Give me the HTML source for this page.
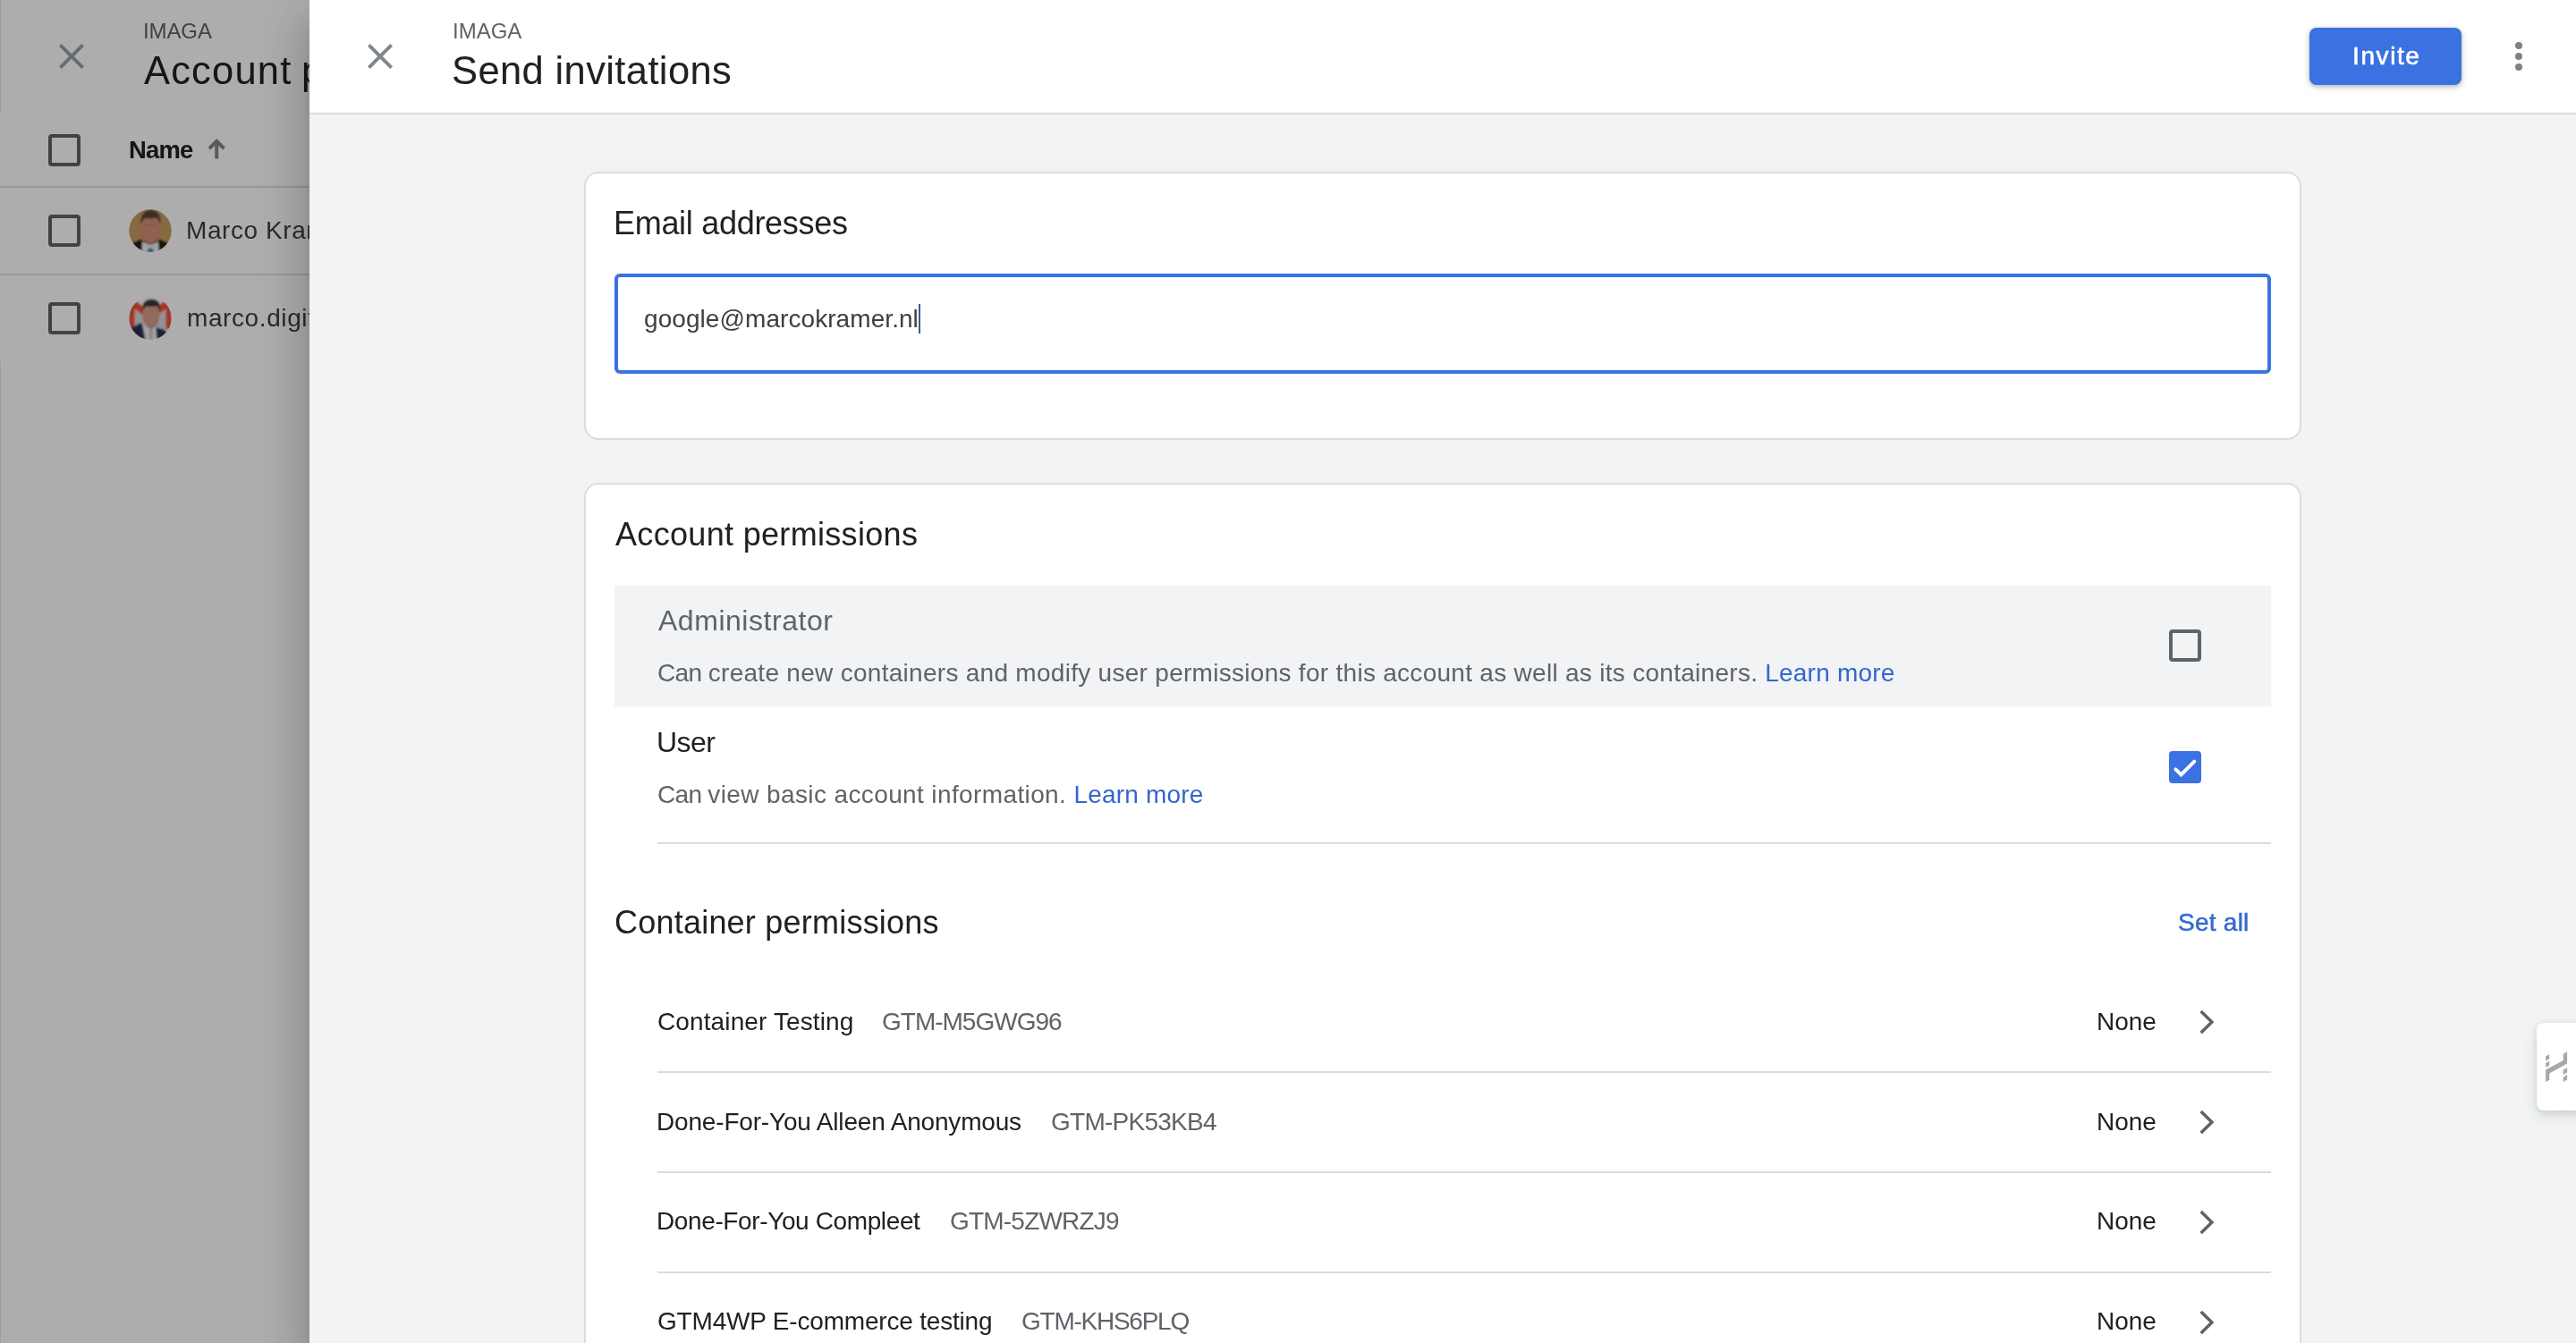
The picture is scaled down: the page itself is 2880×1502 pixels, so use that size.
<!DOCTYPE html>
<html lang="en">
<head>
<meta charset="utf-8">
<title>Send invitations</title>
<style>
*{box-sizing:border-box;margin:0;padding:0}
html,body{width:2880px;height:1502px;overflow:hidden;background:#fff}
body{position:relative;font-family:"Liberation Sans",Arial,sans-serif;color:#202124;-webkit-font-smoothing:antialiased}
.t{position:absolute;white-space:nowrap;line-height:1;will-change:transform}
svg{position:absolute;display:block;overflow:visible}

/* ---------- underlying sheet (dimmed) ---------- */
#under{position:absolute;left:0;top:0;width:400px;height:1502px;background:#fff;overflow:hidden}
#scrim{position:absolute;left:0;top:0;width:400px;height:1502px;background:rgba(0,0,0,.322)}
.edge{position:absolute;left:0;width:1px;background:rgba(0,0,0,.09)}
.hl{position:absolute;left:0;width:400px;height:2px;background:#dadce0}
.cb{position:absolute;width:36px;height:36px;border:4px solid #5f6368;border-radius:4px}
.av{position:absolute;width:48px;height:48px;border-radius:50%;overflow:hidden}

/* ---------- sheet ---------- */
#sheet{position:absolute;left:346px;top:0;width:2534px;height:1502px;background:#f1f3f4;
 box-shadow:0 16px 20px -10px rgba(0,0,0,.2),0 32px 48px 4px rgba(0,0,0,.14),0 12px 60px 10px rgba(0,0,0,.12)}
#hdr{position:absolute;left:0;top:0;width:2534px;height:128px;background:#fff;border-bottom:2px solid #dadce0}
#invite{position:absolute;left:2236px;top:31px;width:170px;height:64px;border-radius:8px;background:#3a72e1;
 box-shadow:0 2px 4px rgba(60,64,67,.26),0 2px 6px 2px rgba(60,64,67,.12)}
.card{position:absolute;left:307px;width:1920px;background:#fff;border:2px solid #dadce0;border-radius:16px}
#card1{top:192px;height:300px}
#card2{top:540px;height:1100px}
#input{position:absolute;left:341px;top:306px;width:1852px;height:112px;border:4px solid #3a72e1;border-radius:6px;background:#fff}
#caret{position:absolute;left:681px;top:340px;width:2px;height:33px;background:#3b5c94}
#adminrow{position:absolute;left:341px;top:655px;width:1852px;height:135px;background:#f1f3f4}
.dv{position:absolute;left:389px;width:1804px;height:2px;background:#dadce0}
.g{color:#5f6368}
.b{color:#3466cb}
.f28{font-size:28px}
.f32{font-size:32px}
.f36{font-size:36px}
#widget{position:absolute;left:2490px;top:1144px;width:60px;height:98px;background:#fff;border-radius:8px;
 box-shadow:0 2px 6px rgba(60,64,67,.12),0 6px 16px rgba(60,64,67,.12)}
</style>
</head>
<body>

<!-- underlying "Account permissions" sheet, dimmed by scrim -->
<div id="under">
  <svg style="left:56px;top:39px" width="48" height="48" viewBox="0 0 24 24"><path fill="#9aa0a6" d="M19 6.41L17.59 5 12 10.59 6.41 5 5 6.41 10.59 12 5 17.59 6.41 19 12 13.41 17.59 19 19 17.59 13.41 12z"/></svg>
  <div class="t g" id="l_imaga" style="left:160px;top:22.500px;font-size:24px;letter-spacing:-.1px">IMAGA</div>
  <div class="t" id="l_title" style="left:161px;top:57.700px;font-size:43.500px;letter-spacing:1.180px;word-spacing:-2.600px">Account permissions</div>

  <div class="cb" style="left:54px;top:150px"></div>
  <div class="t" id="l_name" style="left:143.700px;top:153.600px;font-size:27.400px;font-weight:bold;letter-spacing:-.8px">Name</div>
  <svg style="left:226px;top:150px" width="32" height="32" viewBox="0 0 32 32"><path fill="none" stroke="#80868b" stroke-width="4" d="M16.250 27.600V8.500M8 16.150L16.250 7.900L24.500 16.150"/></svg>
  <div class="hl" style="top:208px"></div>

  <div class="cb" style="left:54px;top:240px"></div>
  <svg id="av1" style="left:143.800px;top:233.600px" width="48" height="48" viewBox="0 0 48 48"><defs><clipPath id="c1"><circle cx="24" cy="24" r="23.700"/></clipPath><filter id="bl" x="-20%" y="-20%" width="140%" height="140%"><feGaussianBlur stdDeviation="1.100"/></filter></defs><g clip-path="url(#c1)"><rect width="48" height="48" fill="#c99c62"/><g filter="url(#bl)"><path fill="#231c19" d="M-2 50V41l15-7 11 6 11-6 15 7v9z"/><path fill="#eef3f9" d="M15 36.500L24 40l9-3.500 1 13.500H14.500z"/><path fill="#6a7fae" d="M21.500 43.500h5.500l1.500 6.500h-8.500z"/><ellipse cx="24.200" cy="23" rx="10" ry="14.500" fill="#d58f7a"/><path fill="#5a4434" d="M13.500 17C12.500 7 17.500 1 24.500 1S37 7 35 17.500c-1.200-5-2.500-7-4-8-4 1.200-9.500 1.200-12.500.5-2.500 1.500-3.800 4-5 7z"/><path fill="#b67864" d="M15.500 28c2 6 5 9.500 8.700 9.500s6.500-3.500 8.700-9.500c-1 8-4.500 12-8.700 12S16.500 36 15.500 28z"/><path fill="#bf806c" d="M17 16.500h14v2H17z"/></g></g></svg>
  <div class="t" id="l_r1" style="left:208px;top:244px;font-size:28px;color:#3c4043;letter-spacing:.58px">Marco Kramer</div>
  <div class="hl" style="top:306px"></div>

  <div class="cb" style="left:54px;top:338px"></div>
  <svg id="av2" style="left:143.800px;top:332px" width="48" height="48" viewBox="0 0 48 48"><defs><clipPath id="c2"><circle cx="24" cy="24" r="23.700"/></clipPath></defs><g clip-path="url(#c2)"><rect width="48" height="48" fill="#fbfbfb"/><g filter="url(#bl)"><rect x="6" y="11" width="36" height="26" fill="#d9d9d9"/><path fill="#ef4f39" d="M0 4.500h7.500L24 18 40.500 4.500H48V36h-6.500V13.500L24 26.500 6.500 13.500V36H0z"/><path fill="#2b3357" d="M-1 37l14-8 6 5 3 16H-1z"/><path fill="#2b3357" d="M30.500 34l10 3 6 13H28z"/><path fill="#efeffa" d="M15 30l15 1.500 1.500 18.500H19z"/><path fill="#d6b6a1" d="M23 35h3.500l-.5 15h-2.500z"/><ellipse cx="24.800" cy="21" rx="9.800" ry="12.200" fill="#d89f89"/><path fill="#383838" d="M15.500 15C14.500 7.500 19 3 25.500 3S36 7 34.500 15.500c-1-3-2-4.200-3.500-5-4 .8-8 .8-11 0-1.800 1-3.200 2.500-4.500 4.500z"/><path fill="#bd8773" d="M17 25c2 5 4.500 8 7.800 8s5.800-3 7.800-8c-1 7-4 10-7.800 10S18 32 17 25z"/></g></g></svg>
  <div class="t" id="l_r2" style="left:208.500px;top:341.600px;font-size:28px;color:#3c4043;letter-spacing:.6px">marco.digitalmarketing</div>
</div>
<div id="scrim"></div>
<div class="edge" style="top:0;height:127px"></div>
<div class="edge" style="top:404px;height:1098px"></div>

<!-- "Send invitations" sheet -->
<div id="sheet">
  <div id="hdr"></div>
  <svg style="left:55px;top:39px" width="48" height="48" viewBox="0 0 24 24"><path fill="#80868b" d="M19 6.41L17.59 5 12 10.59 6.41 5 5 6.41 10.59 12 5 17.59 6.41 19 12 13.41 17.59 19 19 17.59 13.41 12z"/></svg>
  <div class="t g" id="p_imaga" style="left:159.500px;top:22.500px;font-size:24px;letter-spacing:0">IMAGA</div>
  <div class="t" id="p_title" style="left:159px;top:57.900px;font-size:43.500px;letter-spacing:.38px">Send invitations</div>
  <div id="invite"></div>
  <div class="t" id="invite_t" style="left:2283.500px;top:49px;font-size:28px;color:#fff;letter-spacing:1.6px;-webkit-text-stroke:.6px #fff">Invite</div>
  <svg style="left:2446px;top:39px" width="48" height="48" viewBox="0 0 24 24"><g fill="#808080"><circle cx="12" cy="6" r="2"/><circle cx="12" cy="12" r="2"/><circle cx="12" cy="18" r="2"/></g></svg>

  <div class="card" id="card1"></div>
  <div class="t f36" id="email_title" style="left:340px;top:232px;letter-spacing:-.3px">Email addresses</div>
  <div id="input"></div>
  <div class="t f28" id="email_text" style="left:373.500px;top:343px;color:#3c4043;letter-spacing:.07px">google@marcokramer.nl</div>
  <div id="caret"></div>

  <div class="card" id="card2"></div>
  <div class="t f36" id="acct_title" style="left:342px;top:580px;letter-spacing:.32px">Account permissions</div>
  <div id="adminrow"></div>
  <div class="t f32 g" id="admin" style="left:390px;top:678px;letter-spacing:.53px">Administrator</div>
  <div class="t f28 g" id="admin_desc" style="left:389px;top:739px;letter-spacing:.285px"><span style="letter-spacing:-.6px">Can </span>create new containers and modify user permissions for this account as well as its containers. <span class="b" id="admin_learn" style="letter-spacing:.2px">Learn more</span></div>
  <div class="cb" style="left:2079px;top:704px"></div>

  <div class="t f32" id="user" style="left:388px;top:814px;letter-spacing:-.55px">User</div>
  <div class="t f28 g" id="user_desc" style="left:389px;top:875px;letter-spacing:.38px"><span style="letter-spacing:-.7px">Can </span>view basic account information. <span class="b" id="user_learn" style="letter-spacing:.2px">Learn more</span></div>
  <div class="cb" style="left:2079px;top:840px;background:#3a72e1;border-color:#3a72e1"></div>
  <svg style="left:2079px;top:840px" width="36" height="36" viewBox="0 0 36 36"><path fill="none" stroke="#fff" stroke-width="4" stroke-linecap="round" d="M7.400 20.300L13.500 26.400L28.300 11.600"/></svg>
  <div class="dv" style="top:942px"></div>

  <div class="t f36" id="cont_title" style="left:341px;top:1014px;letter-spacing:.22px">Container permissions</div>
  <div class="t f28 b" id="setall" style="left:2088.500px;top:1017.800px;font-size:28px;letter-spacing:.25px;color:#3569d0;-webkit-text-stroke:.5px #3569d0">Set all</div>

  <div class="t f28" id="r1n" style="left:389px;top:1128.700px;letter-spacing:.12px">Container Testing</div>
  <div class="t f28 g" id="r1i" style="left:640px;top:1128.700px;letter-spacing:-1px">GTM-M5GWG96</div>
  <div class="t f28" id="r1v" style="left:1998px;top:1128.700px">None</div>
  <svg class="chev" style="left:2108px;top:1127.15px" width="24" height="32" viewBox="0 0 24 32"><path fill="none" stroke="#5f6368" stroke-width="3.500" d="M6.700 4.050L18.900 16L6.700 27.950"/></svg>
  <div class="dv" style="top:1198px"></div>

  <div class="t f28" id="r2n" style="left:388px;top:1240.500px;letter-spacing:-.175px">Done-For-You Alleen Anonymous</div>
  <div class="t f28 g" id="r2i" style="left:828.5px;top:1240.500px;letter-spacing:-.75px">GTM-PK53KB4</div>
  <div class="t f28" id="r2v" style="left:1998px;top:1240.500px">None</div>
  <svg class="chev" style="left:2108px;top:1238.95px" width="24" height="32" viewBox="0 0 24 32"><path fill="none" stroke="#5f6368" stroke-width="3.500" d="M6.700 4.050L18.900 16L6.700 27.950"/></svg>
  <div class="dv" style="top:1310px"></div>

  <div class="t f28" id="r3n" style="left:388px;top:1352px;letter-spacing:-.38px">Done-For-You Compleet</div>
  <div class="t f28 g" id="r3i" style="left:716px;top:1352px;letter-spacing:-.79px">GTM-5ZWRZJ9</div>
  <div class="t f28" id="r3v" style="left:1998px;top:1352px">None</div>
  <svg class="chev" style="left:2108px;top:1350.70px" width="24" height="32" viewBox="0 0 24 32"><path fill="none" stroke="#5f6368" stroke-width="3.500" d="M6.700 4.050L18.900 16L6.700 27.950"/></svg>
  <div class="dv" style="top:1422px"></div>

  <div class="t f28" id="r4n" style="left:389px;top:1464px;letter-spacing:-.19px">GTM4WP E-commerce testing</div>
  <div class="t f28 g" id="r4i" style="left:796px;top:1464px;letter-spacing:-1.25px">GTM-KHS6PLQ</div>
  <div class="t f28" id="r4v" style="left:1998px;top:1464px">None</div>
  <svg class="chev" style="left:2108px;top:1462.50px" width="24" height="32" viewBox="0 0 24 32"><path fill="none" stroke="#5f6368" stroke-width="3.500" d="M6.700 4.050L18.900 16L6.700 27.950"/></svg>

  <div id="widget"></div>
  <svg id="wicon" style="left:2498px;top:1174px" width="28" height="38" viewBox="0 0 28 38"><g fill="#a5a8ac"><path d="M21.700 5L26.100 2.100V15.500L6.250 26.500V33.800L2.100 36.300V22.500L21.700 12z"/><path d="M2.100 7.500L6.250 5V10L2.100 12.500z"/><path d="M2.100 15L6.250 12.500V17.500L2.100 20z"/><path d="M21.700 22.500L26.100 20V25.500L21.700 28z"/><path d="M21.700 30.500L26.100 28V33.500L21.700 36z"/></g></svg>
</div>

</body>
</html>
